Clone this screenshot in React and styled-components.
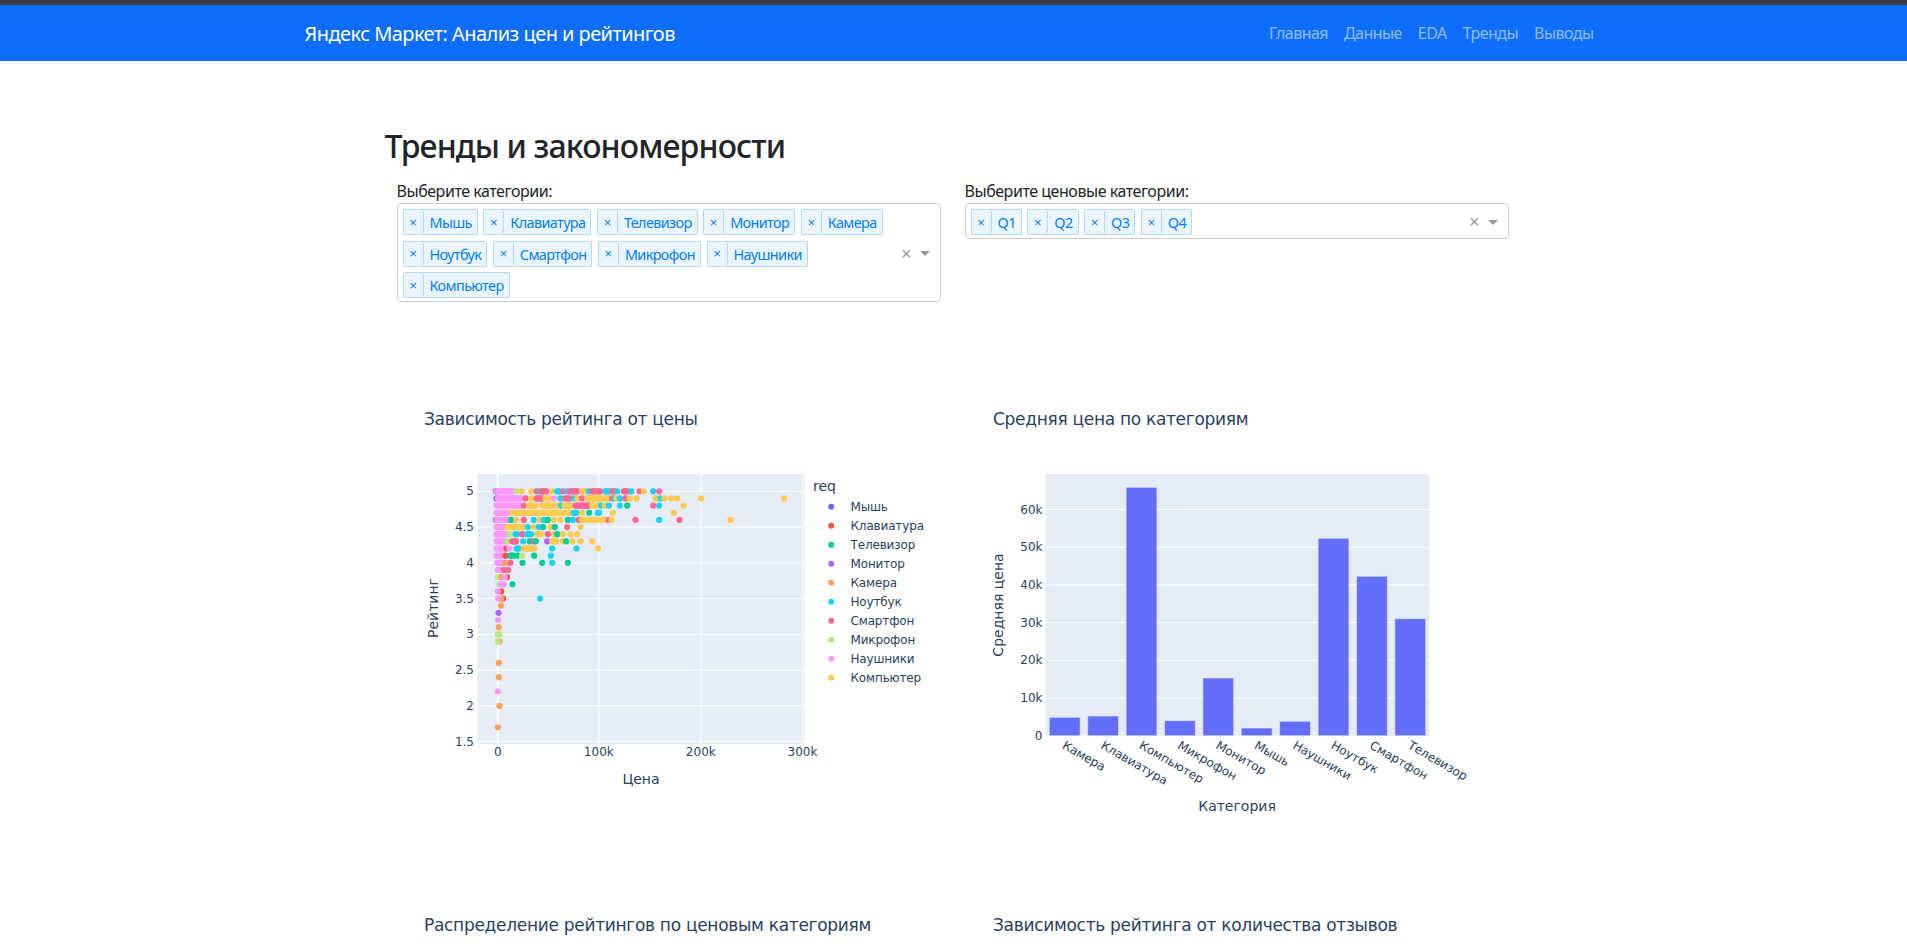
import React from 'react'
import styled, { createGlobalStyle } from 'styled-components'

const UI_FONT = '"Noto Sans", "Open Sans", sans-serif'
const PLOT_FONT = '"DejaVu Sans", Verdana, sans-serif'

const GlobalStyle = createGlobalStyle`
  html, body {
    margin: 0;
    height: 100%;
    overflow: hidden;
    background: #fff;
    color: #212529;
    font-family: ${UI_FONT};
    font-size: 16px;
  }
  * { box-sizing: border-box; }
`

const TopStrip = styled.div`
  height: 5px;
  background: #3c3c3c;
`

const Navbar = styled.nav`
  height: 56px;
  background: #0d6efd;
`

const NavInner = styled.div`
  width: 1320px;
  height: 100%;
  margin-left: 292.5px;
  padding: 0 12px;
  display: flex;
  align-items: center;
  justify-content: space-between;
`

const Brand = styled.a`
  color: #fff;
  font-size: 20px;
  letter-spacing: -0.55px;
`

const NavLinks = styled.div`
  display: flex;
  margin-right: -1px;
`

const NavLink = styled.a`
  padding: 0 8px;
  color: rgba(255, 255, 255, 0.55);
  font-size: 16px;
  letter-spacing: -0.55px;
`

const Main = styled.main`
  width: 1136px;
  margin-left: 384.5px;
  padding-top: 66px;
`

const Heading = styled.h2`
  margin: 0 0 14px;
  font-size: 32px;
  font-weight: 500;
  line-height: 38.4px;
  letter-spacing: -0.85px;
`

const Columns = styled.div`
  display: grid;
  grid-template-columns: 1fr 1fr;
  align-items: start;
  margin-bottom: ${p => p.$gap}px;
`

const Column = styled.div`
  padding: 0 12px;
`

const ChartColumn = styled.div`
  padding-left: 13px;
`

const FieldLabel = styled.label`
  display: block;
  height: 24px;
  line-height: 24px;
  font-size: 16px;
  letter-spacing: -0.45px;
`

const Select = styled.div`
  display: flex;
  align-items: center;
  border: 1px solid #ccc;
  border-radius: 4px;
  padding-bottom: 3px;
  background: #fff;
`

const ChipWrap = styled.div`
  flex: 1;
  display: flex;
  flex-wrap: wrap;
  gap: 5.5px 5.5px;
  padding: 5px 5px 0 5px;
`

const Chip = styled.div`
  display: flex;
  height: 26px;
  background: rgba(0, 126, 255, 0.08);
  border: 1px solid rgba(0, 126, 255, 0.24);
  border-radius: 2px;
  color: #007eff;
  font-size: 14.4px;
`

const ChipRemove = styled.span`
  width: 20px;
  display: flex;
  align-items: center;
  justify-content: center;
  border-right: 1px solid rgba(0, 126, 255, 0.24);
  font-family: "Liberation Sans", sans-serif;
  font-size: 13px;
  margin: 1px 0;
`

const ChipLabel = styled.span`
  padding: 0 5px 0 6px;
  line-height: 25px;
  letter-spacing: -0.6px;
`

const Controls = styled.div`
  display: flex;
  align-items: center;
  gap: 8px;
  padding: 5px 9px 0 0;
  margin-right: 1px;
`

const ClearMark = styled.span`
  color: #999;
  font-family: "Liberation Sans", sans-serif;
  font-size: 18px;
  line-height: 1;
`

const Caret = styled.span`
  width: 0;
  height: 0;
  border-style: solid;
  border-width: 5px 5px 0;
  border-color: #999 transparent transparent;
`

const ChartSvg = styled.svg`
  display: block;
  font-family: ${PLOT_FONT};
  fill: #2a3f5f;
`

const ChartTitle = styled.text`
  font-size: 17px;
  letter-spacing: -0.3px;
`

const AxisTitle = styled.text`
  font-size: 14px;
  text-anchor: middle;
`

const Tick = styled.text`
  font-size: 12px;
  text-anchor: ${p => p.$anchor || 'middle'};
`

const LegendLabel = styled.text`
  font-size: 12px;
  letter-spacing: -0.15px;
`

const PlotArea = styled.rect`
  fill: #e5ecf6;
`

const GridLine = styled.line`
  stroke: #fff;
  stroke-width: ${p => p.$zero ? 2 : 1};
`

const Bar = styled.rect`
  fill: #636efa;
  stroke: #e5ecf6;
  stroke-opacity: 0.6;
  stroke-width: 1;
`

const CATEGORIES = ['Мышь', 'Клавиатура', 'Телевизор', 'Монитор', 'Камера', 'Ноутбук', 'Смартфон', 'Микрофон', 'Наушники', 'Компьютер']
const PRICE_TIERS = ['Q1', 'Q2', 'Q3', 'Q4']

const COLORS = {
  b: '#636efa', r: '#ef553b', g: '#00cc96', v: '#ab63fa', o: '#ffa15a',
  c: '#19d3f3', p: '#ff6692', l: '#b6e880', m: '#ff97ff', y: '#fecb52',
}
const LEGEND_COLORS = ['b', 'r', 'g', 'v', 'o', 'c', 'p', 'l', 'm', 'y']

// rating -> runs of dots, "color from to" in px across the crop I measured (scale 3, origin x=410)
const SCATTER = {
  5: 'b256 m258-310 l318 y333 y362 p378 c388 p392-410 y425 c440-450 p458 c470 p478-505 y515-528 c535 p545-572 c585-598 p605-615 c620 p640-655 c662 p687 y700 c728 p746',
  4.9: 'b258 m262-330 p345 y362 p378-395 y405-420 m430 c450 p465-480 c490 y500 p515 y530-595 p605 c612 y618 c628 p645 y658 y678 l735 y737 c750 y762 y781 y800 y872 y1121',
  4.8: 'm258-330 p340 y355-378 y395-445 c452 y462-488 p495-535 y545-565 c572 y583 c595 c628 g650 p728 c746 y819',
  4.7: 'm258-295 y305-480 c490-500 y514 g536 c562-568 y607 y790',
  4.6: 'b256 m258-295 g302 y317 p340 c370 y387 c400 g412 y430 y450 g472 c487 p505 y515-590 p595 y603 p675 c746 p807 y960',
  4.5: 'm258-285 y290-340 c352 y370 c385 g398 y420 g433 p470 y510',
  4.4: 'm258-290 l297 c315-322 p335 c350-362 y380-395 p412 y431 g440 y457 y480 y500',
  4.3: 'm258-282 l291 p305-318 c338 g358 p370 g376 v410 y425-440 y457 g467 y486 y510 y545',
  4.2: 'm258-283 r288 m296 c318-328 y340-372 c425 c498 y563',
  4.1: 'm258-275 r285 g300-308 g320 l335 g371 c421',
  4: 'm260-278 o285 p300 g336 g395 c425 g472',
  3.9: 'm262-268 p280 p293',
  3.8: 'l262 o272 r290 m283',
  3.7: 'l266 m272-280 g306',
  3.6: 'r272 m262',
  3.5: 'r278 o272 m263 c389',
  3.4: 'o271',
  3.3: 'v264',
  3.2: 'm263',
  3.1: 'o265',
  3: 'l262-268',
  2.9: 'o267 l262',
  2.6: 'o265',
  2.4: 'o265',
  2.2: 'm262',
  2: 'o267',
  1.7: 'o262',
}

const ratingY = v => 491.3 + (5 - v) * 71.5 - 374

function scatterDots() {
  const dots = []
  Object.entries(SCATTER).forEach(([rating, runs]) => {
    runs.split(' ').forEach(run => {
      const [from, to] = run.slice(1).split('-').map(Number)
      const last = to || from
      for (let zx = from; zx <= last; zx += 4) {
        dots.push({ color: COLORS[run[0]], x: 410 + zx / 3 - 397.5, y: ratingY(Number(rating)) })
      }
    })
  })
  return dots
}

function ScatterChart() {
  const xTicks = [['0', 99.8], ['100k', 200.8], ['200k', 302.8], ['300k', 404.5]]
  const yTicks = ['5', '4.5', '4', '3.5', '3', '2.5', '2', '1.5']
  return (
    <ChartSvg width="544" height="450">
      <ChartTitle x="26" y="50.5">Зависимость рейтинга от цены</ChartTitle>
      <PlotArea x="79.5" y="100" width="327" height="270" />
      {yTicks.map(t => (
        <React.Fragment key={t}>
          <GridLine x1="79.5" x2="406.5" y1={ratingY(Number(t))} y2={ratingY(Number(t))} />
          <Tick $anchor="end" x="76" y={ratingY(Number(t)) + 4}>{t}</Tick>
        </React.Fragment>
      ))}
      {xTicks.map(([t, x]) => (
        <React.Fragment key={t}>
          <GridLine $zero={t === '0'} x1={x} x2={x} y1="100" y2="370" />
          <Tick x={x} y="382">{t}</Tick>
        </React.Fragment>
      ))}
      {scatterDots().map((d, i) => <circle key={i} cx={d.x} cy={d.y} r="3.1" fill={d.color} />)}
      <AxisTitle x="243" y="410">Цена</AxisTitle>
      <AxisTitle transform="translate(39.5 234) rotate(-90)">Рейтинг</AxisTitle>
      <text x="415" y="117" fontSize="14">req</text>
      {CATEGORIES.map((c, i) => (
        <React.Fragment key={c}>
          <circle cx="433.2" cy={132.7 + i * 19} r="3" fill={COLORS[LEGEND_COLORS[i]]} />
          <LegendLabel x="452.5" y={137 + i * 19}>{c}</LegendLabel>
        </React.Fragment>
      ))}
    </ChartSvg>
  )
}

const AVG_PRICE = [
  ['Камера', 717.3], ['Клавиатура', 716], ['Компьютер', 487.3], ['Микрофон', 720.7], ['Монитор', 678],
  ['Мышь', 728], ['Наушники', 721.3], ['Ноутбук', 538.3], ['Смартфон', 576.3], ['Телевизор', 618.7],
]

function BarChart() {
  const base = 735.7 - 374
  const band = 38.4
  const left = 79.5
  const yTicks = ['0', '10k', '20k', '30k', '40k', '50k', '60k']
  return (
    <ChartSvg width="544" height="450">
      <ChartTitle x="27" y="50.5">Средняя цена по категориям</ChartTitle>
      <PlotArea x={left} y="100" width="384" height={base - 100} />
      {yTicks.map((t, i) => (
        <React.Fragment key={t}>
          {i > 0 && <GridLine x1={left} x2={left + 384} y1={base - i * 37.7} y2={base - i * 37.7} />}
          <Tick $anchor="end" x={left - 3} y={base - i * 37.7 + 4}>{t}</Tick>
        </React.Fragment>
      ))}
      {AVG_PRICE.map(([name, top], i) => (
        <React.Fragment key={name}>
          <Bar x={left + i * band + 3.8} y={top - 374} width="30.8" height={735.7 - top} />
          <Tick
            $anchor="start"
            transform={`translate(${left + i * band + 16} ${base + 12}) rotate(30)`}
          >
            {name}
          </Tick>
        </React.Fragment>
      ))}
      <AxisTitle x="271" y="437">Категория</AxisTitle>
      <AxisTitle transform="translate(37 231) rotate(-90)">Средняя цена</AxisTitle>
    </ChartSvg>
  )
}

function TitleOnlyChart({ title, x }) {
  return (
    <ChartSvg width="544" height="70">
      <ChartTitle x={x} y="50.5">{title}</ChartTitle>
    </ChartSvg>
  )
}

function MultiSelect({ values }) {
  return (
    <Select>
      <ChipWrap>
        {values.map(v => (
          <Chip key={v}>
            <ChipRemove>×</ChipRemove>
            <ChipLabel>{v}</ChipLabel>
          </Chip>
        ))}
      </ChipWrap>
      <Controls>
        <ClearMark>×</ClearMark>
        <Caret />
      </Controls>
    </Select>
  )
}

export default function App() {
  return (
    <>
      <GlobalStyle />
      <TopStrip />
      <Navbar>
        <NavInner>
          <Brand>Яндекс Маркет: Анализ цен и рейтингов</Brand>
          <NavLinks>
            {['Главная', 'Данные', 'EDA', 'Тренды', 'Выводы'].map(l => <NavLink key={l}>{l}</NavLink>)}
          </NavLinks>
        </NavInner>
      </Navbar>
      <Main>
        <Heading>Тренды и закономерности</Heading>
        <Columns $gap={72}>
          <Column>
            <FieldLabel>Выберите категории:</FieldLabel>
            <MultiSelect values={CATEGORIES} />
          </Column>
          <Column>
            <FieldLabel>Выберите ценовые категории:</FieldLabel>
            <MultiSelect values={PRICE_TIERS} />
          </Column>
        </Columns>
        <Columns $gap={56}>
          <ChartColumn><ScatterChart /></ChartColumn>
          <ChartColumn><BarChart /></ChartColumn>
        </Columns>
        <Columns $gap={0}>
          <ChartColumn><TitleOnlyChart x={26} title="Распределение рейтингов по ценовым категориям" /></ChartColumn>
          <ChartColumn><TitleOnlyChart x={27} title="Зависимость рейтинга от количества отзывов" /></ChartColumn>
        </Columns>
      </Main>
    </>
  )
}
